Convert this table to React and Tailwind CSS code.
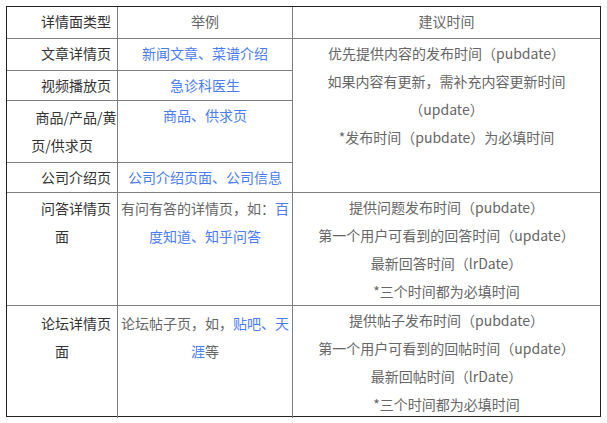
import React from "react";

const link = "text-[#4a7cf6]";

function Cell1({ children, className = "" }) {
  return (
    <td
      className={`border border-[#808080] align-top text-center indent-[2em] text-[#333] whitespace-nowrap p-0 ${className}`}
    >
      {children}
    </td>
  );
}

function Cell2({ children, className = "" }) {
  return (
    <td
      className={`border border-[#808080] align-top text-center text-[#666] whitespace-nowrap p-0 ${className}`}
    >
      {children}
    </td>
  );
}

function Cell3({ children, className = "", rowSpan }) {
  return (
    <td
      rowSpan={rowSpan}
      className={`border border-[#808080] align-top text-center text-[#666] whitespace-nowrap p-0 ${className}`}
    >
      {children}
    </td>
  );
}

export default function App() {
  return (
    <div
      className="bg-white w-[607px] h-[423px] pt-[6px] pl-[6px]"
      style={{ fontFamily: '"Noto Sans CJK SC", "Liberation Sans", sans-serif' }}
    >
      <div className="w-[595px] h-[411px] border border-[#222]">
        <table className="w-full table-fixed border-collapse border-hidden text-[14px] leading-[28px]">
          <colgroup>
            <col className="w-[110.5px]" />
            <col className="w-[175px]" />
            <col />
          </colgroup>
          <tbody>
            <tr className="h-[31px]">
              <Cell1 className="align-middle">详情面类型</Cell1>
              <Cell2 className="align-middle text-[#444]">举例</Cell2>
              <Cell3 className="align-middle text-[#555]">建议时间</Cell3>
            </tr>
            <tr className="h-[32px]">
              <Cell1>文章详情页</Cell1>
              <Cell2>
                <span className={link}>新闻文章、菜谱介绍</span>
              </Cell2>
              <Cell3 rowSpan={4}>
                <div>优先提供内容的发布时间（pubdate）</div>
                <div>如果内容有更新，需补充内容更新时间</div>
                <div>（update）</div>
                <div>*发布时间（pubdate）为必填时间</div>
              </Cell3>
            </tr>
            <tr className="h-[30px]">
              <Cell1>视频播放页</Cell1>
              <Cell2>
                <span className={link}>急诊科医生</span>
              </Cell2>
            </tr>
            <tr className="h-[62px]">
              <Cell1 className="pt-[2px]">
                商品/产品/黄
                <br />
                页/供求页
              </Cell1>
              <Cell2>
                <span className={link}>商品、供求页</span>
              </Cell2>
            </tr>
            <tr className="h-[30px]">
              <Cell1>公司介绍页</Cell1>
              <Cell2>
                <span className={link}>公司介绍页面、公司信息</span>
              </Cell2>
            </tr>
            <tr className="h-[113px]">
              <Cell1 className="pt-[1px]">
                问答详情页
                <br />
                面
              </Cell1>
              <Cell2 className="pt-[1px]">
                有问有答的详情页，如：<span className={link}>百</span>
                <br />
                <span className={link}>度知道、知乎问答</span>
              </Cell2>
              <Cell3>
                <div>提供问题发布时间（pubdate）</div>
                <div>第一个用户可看到的回答时间（update）</div>
                <div>最新回答时间（lrDate）</div>
                <div>*三个时间都为必填时间</div>
              </Cell3>
            </tr>
            <tr className="h-[111px]">
              <Cell1 className="pt-[3px]">
                论坛详情页
                <br />
                面
              </Cell1>
              <Cell2 className="pt-[3px]">
                论坛帖子页，如，<span className={link}>贴吧、天</span>
                <br />
                <span className={link}>涯</span>等
              </Cell2>
              <Cell3>
                <div>提供帖子发布时间（pubdate）</div>
                <div>第一个用户可看到的回帖时间（update）</div>
                <div>最新回帖时间（lrDate）</div>
                <div>*三个时间都为必填时间</div>
              </Cell3>
            </tr>
          </tbody>
        </table>
      </div>
    </div>
  );
}
